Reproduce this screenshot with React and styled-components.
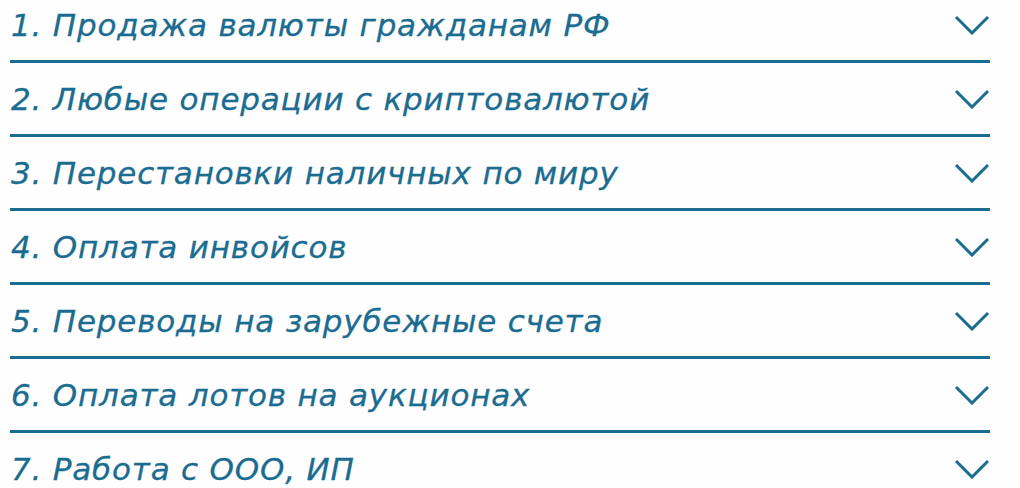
import React, {useState} from 'react'
import styled, {createGlobalStyle} from "styled-components";

const services = [
  "1. Продажа валюты гражданам РФ",
  "2. Любые операции с криптовалютой",
  "3. Перестановки наличных по миру",
  "4. Оплата инвойсов",
  "5. Переводы на зарубежные счета",
  "6. Оплата лотов на аукционах",
  "7. Работа с ООО, ИП",
]

const Chevron = ({open}) => (
  <Arrow open={open} width="36" height="20" viewBox="0 0 36 20">
    <polyline points="2,2 18,18 34,2" fill="none" stroke="currentColor" strokeWidth="3" />
  </Arrow>
)

function App() {
  const [openIndex, setOpenIndex] = useState(null)

  return (
    <>
      <GlobalStyle />
      <List>
        {services.map((title, i) => (
          <Item key={title}>
            <Head onClick={() => setOpenIndex(openIndex === i ? null : i)}>
              <Title>{title}</Title>
              <Chevron open={openIndex === i} />
            </Head>
          </Item>
        ))}
      </List>
    </>
  );
}

const accent = "#1b6c91"

const GlobalStyle = createGlobalStyle`
body {
  margin: 0;
  background: #fefefe;
  overflow: hidden;
}
`

const List = styled.div`
width: 980px;
margin: -11px 0 0 10px;
display: flex;
flex-direction: column;
`

const Item = styled.div`
border-bottom: 3px solid ${accent};
`

const Head = styled.div`
height: 71px;
display: flex;
align-items: center;
justify-content: space-between;
cursor: pointer;
`

const Title = styled.span`
font-family: "DejaVu Sans", sans-serif;
font-style: italic;
font-size: 31px;
letter-spacing: 0.8px;
color: ${accent};
-webkit-text-stroke: 0.3px ${accent};
padding-left: 1px;
`

const Arrow = styled.svg`
color: ${accent};
transform: ${props => props.open ? "rotate(180deg)" : "none"};
`

export default App
